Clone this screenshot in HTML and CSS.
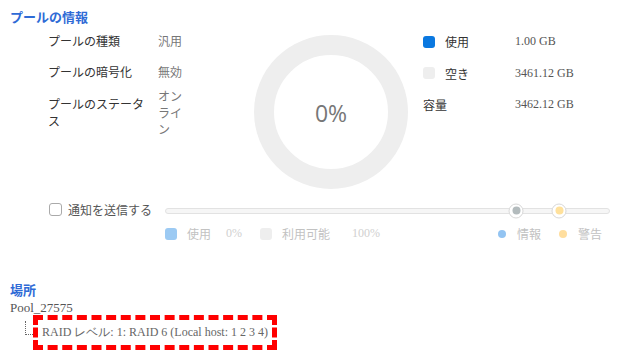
FILE: index.html
```html
<!DOCTYPE html>
<html lang="ja">
<head>
    <meta charset="UTF-8">
    <title>プールの情報</title>
    <link rel="stylesheet" href="styles.css">
</head>
<body>
    <section class="pool-info">
        <h2 class="section-title">プールの情報</h2>
        <div class="overview">
            <div class="props">
                <div class="prop-label">プールの種類</div>
                <div class="prop-value">汎用</div>
                <div class="prop-label">プールの暗号化</div>
                <div class="prop-value">無効</div>
                <div class="prop-label">プールのステータス</div>
                <div class="prop-value">オンライン</div>
            </div>
            <div class="donut">
                <div class="donut-hole">0%</div>
            </div>
            <div class="usage">
                <div class="usage-row">
                    <span class="swatch swatch-used"></span>
                    <span class="usage-label">使用</span>
                    <span class="usage-value">1.00 GB</span>
                </div>
                <div class="usage-row">
                    <span class="swatch swatch-free"></span>
                    <span class="usage-label">空き</span>
                    <span class="usage-value">3461.12 GB</span>
                </div>
                <div class="usage-row">
                    <span class="usage-label usage-total">容量</span>
                    <span class="usage-value">3462.12 GB</span>
                </div>
            </div>
        </div>

        <div class="alerts">
            <label class="notify">
                <span class="checkbox"></span>
                <span>通知を送信する</span>
            </label>
            <div class="slider">
                <span class="thumb thumb-info"><span class="thumb-dot"></span></span>
                <span class="thumb thumb-warn"><span class="thumb-dot"></span></span>
            </div>
            <div class="slider-legend">
                <div class="legend-group">
                    <span class="swatch swatch-used-light"></span>
                    <span class="legend-label legend-used">使用</span>
                    <span class="legend-value legend-used-value">0%</span>
                    <span class="swatch swatch-free"></span>
                    <span class="legend-label legend-free">利用可能</span>
                    <span class="legend-value">100%</span>
                </div>
                <div class="legend-group">
                    <span class="dot dot-info"></span>
                    <span class="legend-label legend-info">情報</span>
                    <span class="dot dot-warn"></span>
                    <span class="legend-label legend-warn">警告</span>
                </div>
            </div>
        </div>
    </section>

    <section class="location">
        <h2 class="section-title">場所</h2>
        <div class="pool-name">Pool_27575</div>
        <div class="tree">
            <span class="tree-line"></span>
            <span class="tree-item">RAID レベル: 1: RAID 6 (Local host: 1 2 3 4)</span>
        </div>
    </section>
</body>
</html>
```

FILE: styles.css
```css
body {
    margin: 0;
    padding: 9px 10px 0;
    background: #fff;
    font-family: "Noto Sans CJK JP", "Noto Sans", sans-serif;
    font-size: 12px;
    color: #333;
}

.section-title {
    margin: 0;
    font-size: 13px;
    line-height: 16px;
    font-weight: bold;
    color: #2f6bd6;
}

/* Верхний блок: свойства, диаграмма, легенда */
.overview {
    display: flex;
    align-items: flex-start;
    margin-top: 1px;
}

.props {
    display: grid;
    grid-template-columns: 100px 26px;
    grid-auto-rows: minmax(31px, auto);
    column-gap: 10px;
    align-items: center;
    margin-left: 38px;
    line-height: 16.5px;
}

.prop-label {
    color: #333;
}

.prop-value {
    color: #777;
}

.donut {
    width: 154px;
    height: 154px;
    margin: 9px 0 0 70px;
    box-sizing: border-box;
    border: 20px solid #eeeeee;
    border-radius: 50%;
    display: flex;
    justify-content: center;
    align-items: center;
}

.donut-hole {
    font-family: "Open Sans", "Noto Sans", sans-serif;
    font-size: 23px;
    color: #777;
    margin-top: 2px;
}

.usage {
    margin-left: 15px;
}

.usage-row {
    display: flex;
    align-items: center;
    height: 31.5px;
}

.swatch {
    width: 12px;
    height: 12px;
    border-radius: 3px;
    flex-shrink: 0;
}

.swatch-used { background: #0a78e0; }
.swatch-free { background: #eeeeee; }
.swatch-used-light { background: #9ccaf3; }

.usage-label {
    width: 70px;
    margin-left: 10px;
    color: #333;
}

.usage-label.usage-total {
    margin-left: 0;
    width: 92px;
}

.usage-value {
    font-family: "Liberation Serif", serif;
    font-size: 12px;
    color: #555;
}

/* Оповещения и ползунок */
.alerts {
    display: grid;
    grid-template-columns: 155px 445px;
    align-items: center;
    margin-top: 12px;
}

.notify {
    display: flex;
    align-items: center;
    gap: 6px;
    margin-left: 39px;
    color: #555;
    white-space: nowrap;
    height: 16px;
}

.checkbox {
    width: 11px;
    height: 11px;
    border: 1px solid #aaa;
    border-radius: 3px;
}

.slider {
    position: relative;
    height: 4px;
    border: 1px solid #e2e2e2;
    border-radius: 3px;
    background: #f6f6f6;
    margin-top: 3px;
}

.thumb {
    position: absolute;
    top: 50%;
    width: 13px;
    height: 13px;
    border: 1px solid #d8d8d8;
    border-radius: 50%;
    background: #fff;
    transform: translate(-50%, -50%);
    display: flex;
    justify-content: center;
    align-items: center;
}

.thumb-info { left: 350px; }
.thumb-warn { left: 393px; }

.thumb-dot {
    width: 8px;
    height: 8px;
    border-radius: 50%;
}

.thumb-info .thumb-dot { background: #b3bbbd; }
.thumb-warn .thumb-dot { background: #ffe19c; }

.slider-legend {
    grid-column: 2;
    display: flex;
    justify-content: space-between;
    align-items: center;
    margin-top: 8px;
    padding-right: 8px;
}

.legend-group {
    display: flex;
    align-items: center;
}

.legend-label {
    color: #c2c2c2;
    margin: 0 0 0 10px;
}

.legend-used { margin-right: 15px; }
.legend-free { margin-right: 22px; }

.legend-value {
    font-family: "Liberation Serif", serif;
    font-size: 12px;
    color: #d0d0d0;
}

.legend-used-value { margin-right: 18px; }

.legend-info {
    margin: 0 18px 0 11px;
}

.legend-warn {
    margin: 0 0 0 11px;
}

.dot {
    width: 8px;
    height: 8px;
    border-radius: 50%;
}

.dot-info { background: #93c4f2; }
.dot-warn { background: #ffde9e; }

/* Расположение */
.location {
    margin-top: 40px;
}

.pool-name {
    font-family: "Liberation Serif", serif;
    font-size: 13px;
    line-height: 16px;
    color: #555;
    margin-top: 2px;
}

.tree {
    display: flex;
    align-items: flex-end;
    margin: -1px 0 0 15px;
}

.tree-line {
    width: 7px;
    height: 13px;
    border-left: 1px dotted #666;
    border-bottom: 1px dotted #666;
    margin-bottom: 15px;
}

.tree-item {
    font-family: "Liberation Serif", serif;
    font-size: 12px;
    color: #666;
    padding: 4px 4px 4px;
    border: 5px dashed #ff0000;
}
```
